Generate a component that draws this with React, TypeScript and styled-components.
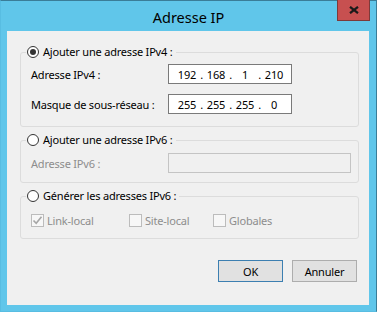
import React from 'react';
import styled, { createGlobalStyle } from 'styled-components';

const GlobalStyle = createGlobalStyle`
  html, body {
    margin: 0;
    padding: 0;
  }
  body {
    font-family: "Noto Sans", "Open Sans", sans-serif;
    font-size: 11px;
    letter-spacing: -0.2px;
    color: #000;
  }
`;

const Window = styled.div`
  width: 377px;
  height: 312px;
  box-sizing: border-box;
  background: #60c6ea;
  border: 1px solid #3a7d98;
  border-left-color: #58bde2;
  border-bottom-color: #58bde2;
  display: flex;
  flex-direction: column;
`;

const TitleBar = styled.div`
  position: relative;
  height: 30px;
  flex-shrink: 0;
  display: flex;
  align-items: center;
  justify-content: center;
  font-size: 14.5px;
  letter-spacing: 0;
  color: #000;
  padding-top: 1px;
  box-sizing: border-box;
`;

const CloseButton = styled.div`
  position: absolute;
  top: -1px;
  right: 6px;
  width: 33px;
  height: 21px;
  box-sizing: border-box;
  background: #c75050;
  border: 1px solid #7d3a3a;
  border-top: none;
  display: flex;
  align-items: center;
  justify-content: center;
`;

const Client = styled.div`
  flex: 1;
  margin: 0 7px 6px 6px;
  background: #f0f0f0;
  padding: 13px 10px 0 13px;
  display: flex;
  flex-direction: column;
  gap: 5px;
`;

const Group = styled.fieldset<{ $pt: number; $pb: number }>`
  margin: 0;
  min-width: 0;
  border: 1px solid #dcdcdc;
  border-radius: 3px;
  padding: ${(p) => p.$pt}px 10px ${(p) => p.$pb}px 10px;
`;

const Legend = styled.legend`
  margin-left: -5px;
  padding: 0 3px 0 1px;
  height: 16px;
  display: flex;
  align-items: center;
  gap: 4px;
  line-height: 16px;
`;

const Radio = styled.span<{ $checked?: boolean }>`
  width: 12px;
  height: 12px;
  box-sizing: border-box;
  border-radius: 50%;
  border: 1px solid #333;
  background: #fff;
  display: flex;
  align-items: center;
  justify-content: center;

  &::after {
    content: '';
    width: 6px;
    height: 6px;
    border-radius: 50%;
    background: ${(p) => (p.$checked ? '#333' : 'transparent')};
  }
`;

const FieldGrid = styled.div`
  display: grid;
  grid-template-columns: 137px auto;
  row-gap: 10px;
  align-items: center;
`;

const Label = styled.span<{ $disabled?: boolean }>`
  color: ${(p) => (p.$disabled ? '#8d8d8d' : '#000')};
`;

const IpBox = styled.div`
  width: 124px;
  height: 20px;
  box-sizing: border-box;
  border: 1px solid #7a7a7a;
  background: #fff;
  padding-left: 6px;
  display: flex;
  align-items: center;
`;

const Segment = styled.span`
  width: 24px;
  text-align: center;
`;

const Dot = styled.span`
  width: 5px;
  text-align: center;
`;

const TextBox = styled.div<{ $disabled?: boolean }>`
  width: 183px;
  height: 20px;
  box-sizing: border-box;
  border: 1px solid ${(p) => (p.$disabled ? '#c4c4c4' : '#7a7a7a')};
  background: ${(p) => (p.$disabled ? '#f0f0f0' : '#fff')};
`;

const CheckRow = styled.div`
  display: grid;
  grid-template-columns: 98px 84px auto;
  align-items: center;
  height: 16px;
`;

const CheckItem = styled.label`
  display: flex;
  align-items: center;
  gap: 3px;
  color: #8d8d8d;
`;

const CheckBox = styled.span`
  width: 13px;
  height: 13px;
  box-sizing: border-box;
  border: 1px solid #bcbcbc;
  background: #f7f7f7;
  display: flex;
  align-items: center;
  justify-content: center;
`;

const ButtonRow = styled.div`
  margin-top: 16px;
  margin-right: 2px;
  display: flex;
  justify-content: flex-end;
  gap: 9px;
`;

const Button = styled.button<{ $default?: boolean }>`
  width: 65px;
  height: 22px;
  box-sizing: border-box;
  padding: 0;
  font-family: inherit;
  font-size: 11px;
  letter-spacing: inherit;
  color: #000;
  background: #e1e1e1;
  border: 1px solid ${(p) => (p.$default ? '#3c7fb1' : '#adadad')};
`;

const ipv4 = ['192', '168', '1', '210'];
const mask = ['255', '255', '255', '0'];

const IpField: React.FC<{ parts: string[] }> = ({ parts }) => (
  <IpBox>
    {parts.map((p, i) => (
      <React.Fragment key={i}>
        <Segment>{p}</Segment>
        {i < parts.length - 1 && <Dot>.</Dot>}
      </React.Fragment>
    ))}
  </IpBox>
);

const Check = () => (
  <svg width="11" height="11" viewBox="0 0 11 11">
    <polyline points="1.5,5.5 4.2,8.3 9.5,1.8" fill="none" stroke="#a6a6a6" strokeWidth="1.6" />
  </svg>
);

const App: React.FC = () => {
  return (
    <>
      <GlobalStyle />
      <Window>
        <TitleBar>
          Adresse IP
          <CloseButton>
            <svg width="10" height="8" viewBox="0 0 10 8">
              <path d="M1 0.8 L9 7.2 M9 0.8 L1 7.2" stroke="#1a1a1a" strokeWidth="2.2" />
            </svg>
          </CloseButton>
        </TitleBar>
        <Client>
          <Group $pt={4} $pb={12}>
            <Legend>
              <Radio $checked />
              Ajouter une adresse IPv4 :
            </Legend>
            <FieldGrid>
              <Label>Adresse IPv4 :</Label>
              <IpField parts={ipv4} />
              <Label>Masque de sous-réseau :</Label>
              <IpField parts={mask} />
            </FieldGrid>
          </Group>
          <Group $pt={5} $pb={9}>
            <Legend>
              <Radio />
              Ajouter une adresse IPv6 :
            </Legend>
            <FieldGrid>
              <Label $disabled>Adresse IPv6 :</Label>
              <TextBox $disabled />
            </FieldGrid>
          </Group>
          <Group $pt={8} $pb={10}>
            <Legend>
              <Radio />
              Générer les adresses IPv6 :
            </Legend>
            <CheckRow>
              <CheckItem>
                <CheckBox>
                  <Check />
                </CheckBox>
                Link-local
              </CheckItem>
              <CheckItem>
                <CheckBox />
                Site-local
              </CheckItem>
              <CheckItem>
                <CheckBox />
                Globales
              </CheckItem>
            </CheckRow>
          </Group>
          <ButtonRow>
            <Button $default>OK</Button>
            <Button>Annuler</Button>
          </ButtonRow>
        </Client>
      </Window>
    </>
  );
};

export default App;
